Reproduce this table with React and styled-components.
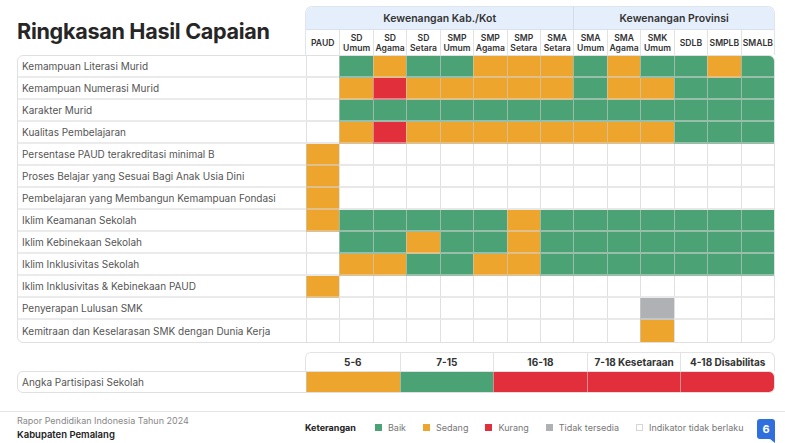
import React from 'react';
import styled, { createGlobalStyle } from 'styled-components';

const COLORS = { G: '#4ba274', O: '#eda52d', R: '#e12f3b', X: '#afb1b4', _: 'transparent' };

const Global = createGlobalStyle`
  html, body { margin: 0; padding: 0; background: #fff; }
  body { font-family: Inter, "Noto Sans", sans-serif; width: 785px; height: 443px; overflow: hidden; }
`;

const Page = styled.div`
  width: 785px;
  height: 443px;
  display: flex;
  flex-direction: column;
`;

const Main = styled.div`
  padding: 6px 10px 0 17px;
  display: flex;
  flex-direction: column;
`;

const TopRow = styled.div`
  display: grid;
  grid-template-columns: 288px 1fr;
  height: 49px;
`;

const Title = styled.h1`
  margin: 0;
  font-size: 21.6px;
  font-weight: 700;
  color: #262626;
  align-self: center;
  letter-spacing: -0.3px;
`;

const HeaderBox = styled.div`
  border: 1px solid #dde5ee;
  border-bottom: none;
  border-radius: 7px 7px 0 0;
  overflow: hidden;
  display: grid;
  grid-template-rows: 23px 1fr;
  grid-template-columns: repeat(14, 1fr);
`;

const GroupCell = styled.div`
  grid-column: span ${p => p.$span};
  background: #e5effb;
  display: flex;
  align-items: center;
  justify-content: center;
  font-size: 10.5px;
  font-weight: 600;
  color: #333;
  border-left: ${p => (p.$first ? 'none' : '1px solid #d3dce8')};
  border-bottom: 1px solid #d9e1ea;
`;

const ColHead = styled.div`
  display: flex;
  align-items: center;
  justify-content: center;
  text-align: center;
  font-size: 8.6px;
  font-weight: 600;
  line-height: 10px;
  color: #333;
  border-left: ${p => (p.$first ? 'none' : '1px solid #e2e2e2')};
`;

const DataBox = styled.div`
  border: 1px solid #e0e0e0;
  border-radius: 6px;
  overflow: hidden;
`;

const Row = styled.div`
  display: grid;
  grid-template-columns: 288px repeat(14, 1fr);
  height: 22px;
`;

const Label = styled.div`
  display: flex;
  align-items: center;
  padding-left: 4px;
  font-size: 10px;
  color: #555;
  white-space: nowrap;
  border-bottom: ${p => (p.$last ? 'none' : '2px solid #ebebeb')};
`;

const Cell = styled.div`
  background: ${p => COLORS[p.$c]};
  border-left: 1px solid rgba(205, 205, 205, 0.6);
  border-bottom: ${p => (p.$last ? 'none' : '2px solid rgba(215, 215, 215, 0.55)')};
`;

const APSWrap = styled.div`
  margin-top: 9px;
  display: grid;
  grid-template-columns: 288px 1fr;
`;

const APSHead = styled.div`
  grid-column: 2;
  display: grid;
  grid-template-columns: repeat(5, 1fr);
  border: 1px solid #e3e3e3;
  border-bottom: none;
  border-radius: 6px 6px 0 0;
  height: 18px;
  overflow: hidden;
`;

const APSHeadCell = styled.div`
  display: flex;
  align-items: center;
  justify-content: center;
  font-size: 10px;
  font-weight: 700;
  color: #333;
  border-left: ${p => (p.$first ? 'none' : '1px solid #e3e3e3')};
`;

const APSRow = styled.div`
  grid-column: 1 / -1;
  display: grid;
  grid-template-columns: 288px repeat(5, 1fr);
  border: 1px solid #e0e0e0;
  border-radius: 6px;
  overflow: hidden;
  height: 22px;
  box-sizing: border-box;
`;

const Footer = styled.footer`
  margin-top: auto;
  height: 32px;
  box-sizing: border-box;
  border-top: 1px solid #e5e5e5;
  padding: 0 10px 0 17px;
  display: flex;
  align-items: center;
`;

const FooterInfo = styled.div`
  width: 288px;
  display: flex;
  flex-direction: column;
  gap: 1px;
`;

const FooterSub = styled.div`
  font-size: 9px;
  color: #888;
  line-height: 12px;
`;

const FooterMain = styled.div`
  font-size: 9.5px;
  font-weight: 600;
  color: #222;
  line-height: 13px;
`;

const Legend = styled.div`
  display: flex;
  align-items: center;
  gap: 17px;
  flex: 1;
`;

const LegendTitle = styled.span`
  font-size: 9px;
  font-weight: 700;
  color: #222;
  margin-right: 2px;
`;

const LegendItem = styled.span`
  display: flex;
  align-items: center;
  gap: 6px;
  font-size: 9px;
  color: #777;
`;

const Swatch = styled.span`
  width: 7px;
  height: 7px;
  box-sizing: border-box;
  background: ${p => (p.$c ? COLORS[p.$c] : '#fff')};
  border: ${p => (p.$c ? 'none' : '1px solid #d6d6d6')};
`;

const Badge = styled.svg`
  align-self: flex-end;
  display: block;
`;

const GROUPS = [
  { name: 'Kewenangan Kab./Kot', span: 8 },
  { name: 'Kewenangan Provinsi', span: 6 },
];

const COLS = [
  ['PAUD'], ['SD', 'Umum'], ['SD', 'Agama'], ['SD', 'Setara'], ['SMP', 'Umum'], ['SMP', 'Agama'],
  ['SMP', 'Setara'], ['SMA', 'Setara'], ['SMA', 'Umum'], ['SMA', 'Agama'], ['SMK', 'Umum'],
  ['SDLB'], ['SMPLB'], ['SMALB'],
];

const ROWS = [
  ['Kemampuan Literasi Murid', '_GOGGOOOGOGGOG'],
  ['Kemampuan Numerasi Murid', '_OROOOOOGOOGGG'],
  ['Karakter Murid', '_GGGGGGGGGGGGG'],
  ['Kualitas Pembelajaran', '_OROOOOOOOOGGG'],
  ['Persentase PAUD terakreditasi minimal B', 'O_____________'],
  ['Proses Belajar yang Sesuai Bagi Anak Usia Dini', 'O_____________'],
  ['Pembelajaran yang Membangun Kemampuan Fondasi', 'O_____________'],
  ['Iklim Keamanan Sekolah', 'OGGGGGOGGGGGGG'],
  ['Iklim Kebinekaan Sekolah', '_GGOGGOGGGGGGG'],
  ['Iklim Inklusivitas Sekolah', '_OOGGOOGGGGGGG'],
  ['Iklim Inklusivitas & Kebinekaan PAUD', 'O_____________'],
  ['Penyerapan Lulusan SMK', '__________X___'],
  ['Kemitraan dan Keselarasan SMK dengan Dunia Kerja', '__________O___'],
];

const APS_COLS = ['5-6', '7-15', '16-18', '7-18 Kesetaraan', '4-18 Disabilitas'];
const APS_VALS = 'OGRRR';

const LEGEND = [
  ['G', 'Baik'], ['O', 'Sedang'], ['R', 'Kurang'], ['X', 'Tidak tersedia'], [null, 'Indikator tidak berlaku'],
];

export default function App() {
  return (
    <Page>
      <Global />
      <Main>
        <TopRow>
          <Title>Ringkasan Hasil Capaian</Title>
          <HeaderBox>
            {GROUPS.map((g, i) => (
              <GroupCell key={g.name} $span={g.span} $first={i === 0}>{g.name}</GroupCell>
            ))}
            {COLS.map((c, i) => (
              <ColHead key={c.join()} $first={i === 0}>
                <span>{c[0]}{c[1] && <><br />{c[1]}</>}</span>
              </ColHead>
            ))}
          </HeaderBox>
        </TopRow>
        <DataBox>
          {ROWS.map(([label, vals], ri) => {
            const last = ri === ROWS.length - 1;
            return (
              <Row key={label}>
                <Label $last={last}>{label}</Label>
                {vals.split('').map((v, ci) => (
                  <Cell key={ci} $c={v} $last={last} />
                ))}
              </Row>
            );
          })}
        </DataBox>
        <APSWrap>
          <APSHead>
            {APS_COLS.map((c, i) => (
              <APSHeadCell key={c} $first={i === 0}>{c}</APSHeadCell>
            ))}
          </APSHead>
          <APSRow>
            <Label $last>Angka Partisipasi Sekolah</Label>
            {APS_VALS.split('').map((v, i) => (
              <Cell key={i} $c={v} $last />
            ))}
          </APSRow>
        </APSWrap>
      </Main>
      <Footer>
        <FooterInfo>
          <FooterSub>Rapor Pendidikan Indonesia Tahun 2024</FooterSub>
          <FooterMain>Kabupaten Pemalang</FooterMain>
        </FooterInfo>
        <Legend>
          <LegendTitle>Keterangan</LegendTitle>
          {LEGEND.map(([c, t]) => (
            <LegendItem key={t}><Swatch $c={c} />{t}</LegendItem>
          ))}
        </Legend>
        <Badge width="18" height="24" viewBox="0 0 18 24">
          <path d="M3 0 H15 Q18 0 18 3 V24 L13 20 H3 Q0 20 0 17 V3 Q0 0 3 0 Z" fill="#2f6fde" />
          <text x="9" y="13.5" textAnchor="middle" fontSize="11" fontWeight="700" fill="#fff" fontFamily="Inter, sans-serif">6</text>
        </Badge>
      </Footer>
    </Page>
  );
}
